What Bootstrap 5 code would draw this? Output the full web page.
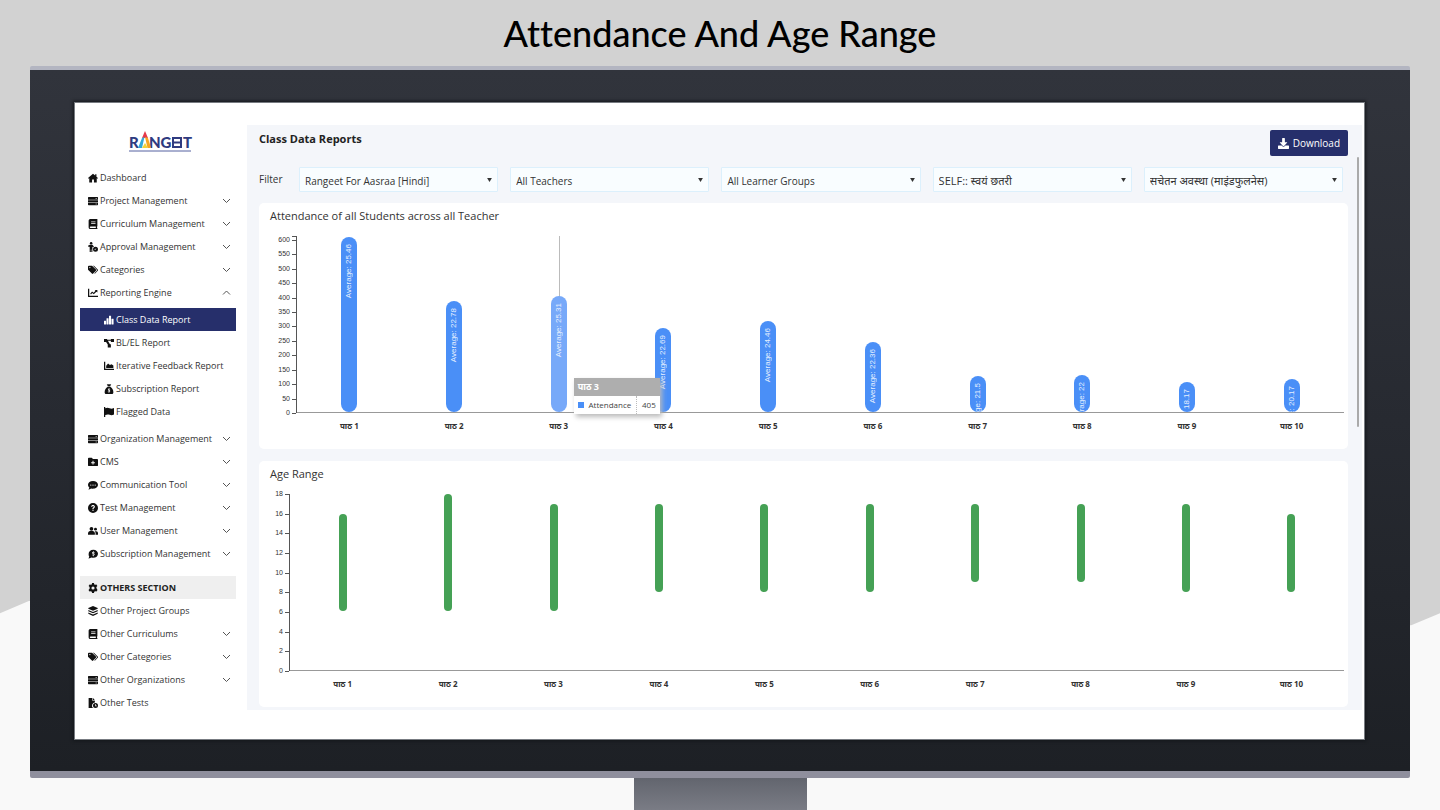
<!DOCTYPE html>
<html lang="en">
<head>
<meta charset="utf-8">
<meta name="viewport" content="width=device-width, initial-scale=1">
<title>Attendance And Age Range</title>
<link href="https://cdn.jsdelivr.net/npm/bootstrap@5.3.0/dist/css/bootstrap.min.css" rel="stylesheet">
<style>
  :root { --navy: #262f6b; --panel: #f4f6fa; --ui: "Open Sans", "Noto Sans", sans-serif; }
  body { background: #d2d2d2; font-family: var(--ui); font-size: 9px; color: #333; }
  .backdrop { inset: 0; z-index: -1; background: #f9f9f9; clip-path: polygon(0 75.7%, 2% 74.2%, 98% 77.2%, 100% 75.7%, 100% 100%, 0 100%); }
  .slide-title { font-family: "Lato", sans-serif; font-weight: 500; font-variant-ligatures: none; font-size: 36px; line-height: 66px; color: #000; }
  .monitor { margin: 0 30px; border-top: 4px solid #b3b5c1; border-bottom: 7px solid #8f8f9d; border-radius: 2px; background: linear-gradient(#31343c, #272a31 50%, #1d2025); padding: 33px 46px 32px 45px; }
  .screen { background: #fff; padding: 22px 2px 25px 0; box-shadow: 0 0 3px 2px #14171b; outline: 1px solid #777b81; }
  .stand { width: 173px; min-height: 32px; background: linear-gradient(#62656e, #7a7c85); }
  .side { width: 172px; padding: 0 11px 0 5px; }
  .logo { height: 41px; padding: 6px 0 0 6px; }
  .side a { height: 23px; padding: 0 5px 0 8px; gap: 2px; color: #333; text-decoration: none; white-space: nowrap; }
  .side a.inner { padding-left: 24px; }
  .side a.current { background: var(--navy); color: #fff; }
  .side .heading { height: 23px; padding-left: 8px; gap: 2px; background: #efefef; font-size: 9px; color: #222; margin-top: 11px; }
  .ico { width: 10px; height: 10px; fill: #111; flex: none; }
  .current .ico { fill: #fff; }
  .chev { width: 9px; height: 9px; fill: none; stroke: #555; stroke-width: 1; margin-left: auto; flex: none; }
  .panel { background: var(--panel); padding: 5px 14px 3px 12px; margin-bottom: 4px; min-width: 0; }
  .panel h2 { font-size: 11px; line-height: 18px; color: #222; }
  .btn-down { background: var(--navy); color: #fff; font-size: 10px; line-height: 16px; padding: 5px 8px; border: 0; border-radius: 2px; gap: 4px; }
  .btn-down:hover { background: #35408a; color: #fff; }
  .btn-down svg { width: 11px; height: 11px; fill: #fff; }
  .filters { margin: 11px 5px 11px 0; gap: 12px; font-size: 10px; }
  .filters > span { width: 28px; flex: none; }
  .filters .form-select { font-size: 10px; line-height: 18px; height: 25px; padding: 3px 20px 1px 5px; border: 1px solid #dcf0fc; border-radius: 1px; color: #333; background: #f9fdff url("data:image/svg+xml,%3Csvg xmlns='http://www.w3.org/2000/svg' viewBox='0 0 6 5'%3E%3Cpath d='M0 0h6L3 5z' fill='%23333'/%3E%3C/svg%3E") no-repeat right 5px center / 5px 4px; }
  .filters .form-select:lang(hi) { font-size: 11px; }
  .chart-card { background: #fff; border-radius: 5px; padding: 4px 4px 14px 11px; height: 246px; }
  .chart-card + .chart-card { margin-top: 12px; }
  .chart-card h3 { font-size: 11px; line-height: 18px; margin: 0 0 11px; font-weight: 400; color: #333; }
  .scale { height: 177px; border-right: 1px solid #555; font: 7px/8px "Liberation Sans", sans-serif; color: #333; }
  .scale-wide { width: 27px; }
  .scale-wide::before { content: ""; position: absolute; right: 0; top: 0; width: 4px; border-top: 1px solid #555; }
  .scale-slim { width: 20px; }
  .scale span { position: absolute; right: 6px; transform: translateY(50%); }
  .scale span::after { content: ""; position: absolute; right: -6px; top: 4px; width: 4px; border-top: 1px solid #555; }
  .plot { height: 177px; border-bottom: 1px solid #999; }
  .slot { flex: 1 1 0; }
  .bar { width: 16px; border-radius: 8px; background: #4a8ff7; padding-top: 7px; }
  .bar.hot { background: #77a9f9; }
  .bar span { writing-mode: vertical-rl; transform: rotate(180deg); font: 8px/10px "Liberation Sans", sans-serif; color: #e6efff; white-space: nowrap; flex: none; }
  .hairline { top: 0; bottom: 0; left: 50%; border-left: 1px solid #bbb; }
  .range { width: 8px; border-radius: 4px; background: #45a155; }
  .xlabels { font: 700 8px/12px "Noto Sans", sans-serif; color: #333; padding-top: 7px; }
  .tip { left: calc(50% + 15px); bottom: -2px; z-index: 3; width: 86px; background: #fff; box-shadow: 2px 3px 5px #bbb; font: 8px/18px var(--ui); color: #444; }
  .tip strong { background: #aeaeae; color: #fff; padding: 0 4px; font-size: 9px; line-height: 18px; }
  .tip i { width: 6px; height: 6px; background: #4a8ff7; }
  .tip b { font-weight: 400; border-left: 1px dotted #bbb; padding-left: 5px; }
  .thumb { right: 3px; top: 32px; width: 2px; height: 270px; background: #aaa; border-radius: 1px; }
</style>
</head>
<body class="d-flex flex-column min-vh-100 position-relative">
<div class="backdrop position-absolute"></div>

<svg class="d-none" xmlns="http://www.w3.org/2000/svg">
  <symbol id="home" viewBox="0 0 16 16"><path d="M8 1 0 8l1 1.200L2 8.400V15h4.500v-4.500h3V15H14V8.400l1 .8L16 8l-2.500-2.200V2h-2v2z"/></symbol>
  <symbol id="server" viewBox="0 0 16 16"><path fill-rule="evenodd" d="M1 1.500h14a1 1 0 0 1 1 1V6H0V2.500a1 1 0 0 1 1-1zm11 2v.8h2.500v-.8zM0 6.800h16v3H0zM0 10.600h16v3a1 1 0 0 1-1 1H1a1 1 0 0 1-1-1zm12 1.600v.8h2.500v-.8z"/></symbol>
  <symbol id="book" viewBox="0 0 16 16"><path fill-rule="evenodd" d="M3.500 0H15v11.500l-.5.5v2.500h.5V16H3.500A2.500 2.500 0 0 1 1 13.500v-11A2.500 2.500 0 0 1 3.500 0zM5 4v1h7V4zm0 2.500v1h7v-1zM4 12a1.200 1.200 0 0 0 0 2.400h8.500V12z"/></symbol>
  <symbol id="approve" viewBox="0 0 16 16"><circle cx="5" cy="2" r="2"/><path d="M0 6 3 4.500h4L9.500 7 8.300 8.500 7 7.500V16H5.300v-4h-.8v4H2.700V7.500L1 8z"/><path fill-rule="evenodd" d="M12 7.500a4 4 0 1 1 0 8 4 4 0 0 1 0-8zm-.6 5.300 1.900-1.900-.6-.6-1.300 1.300-.6-.6-.6.6z"/></symbol>
  <symbol id="tags" viewBox="0 0 16 16"><path fill-rule="evenodd" d="M0 2.500A1.500 1.500 0 0 1 1.500 1h5l6.200 6.200a1.500 1.500 0 0 1 0 2.100l-4.400 4.400a1.500 1.500 0 0 1-2.100 0L0 7.500zM3 3a1 1 0 1 0 0 2 1 1 0 0 0 0-2z"/><path d="M8 1h1.500l6 6.200a1.500 1.500 0 0 1 0 2.100L11 13.800l-.8-.8 3.800-3.900a1 1 0 0 0 0-1.400z"/></symbol>
  <symbol id="line" viewBox="0 0 16 16"><path d="M0 1h2v11.500h14v2H1a1 1 0 0 1-1-1z"/><path d="m3.500 9 3-3.500 2.500 2 3-3.200L10.800 3H15v4.200l-1.500-1.400L9.200 10 6.800 8l-2 2.300z"/></symbol>
  <symbol id="bars" viewBox="0 0 16 16"><rect x="0" y="9" width="3.300" height="6" rx=".5"/><rect x="4" y="5" width="3.300" height="10" rx=".5"/><rect x="8" y="1" width="3.300" height="14" rx=".5"/><rect x="12" y="6" width="3.300" height="9" rx=".5"/></symbol>
  <symbol id="nodes" viewBox="0 0 16 16"><path d="M0 1.500h5v1.300h6V1.500h5v5h-5V4.500H6.200L9.500 10H11v5H6v-4.500L3.300 6.500H0z"/></symbol>
  <symbol id="area" viewBox="0 0 16 16"><path d="M0 1h2v11.500h14v2H1a1 1 0 0 1-1-1zM3.500 11V7.500L6.500 4l3 2.500L12 5l3 2v4z"/></symbol>
  <symbol id="bag" viewBox="0 0 16 16"><path fill-rule="evenodd" d="m4.500 0 2 .8L8 0l1.500.8 2-.8L10 3.500H6zM6 4.500h4c3 2 5 5 5 8.500 0 2-1 3-3 3H4c-2 0-3-1-3-3 0-3.500 2-6.500 5-8.500zm1.500 2V7.600C5.800 8 5.800 10.400 7.500 10.800c1.700.4 1.500 1.200.4 1.200-.8 0-1.200-.3-1.700-.6v1.200l1.300.5V14h1v-.9c2-.4 2-2.900.2-3.400-1.500-.4-1.400-1.100-.4-1.100.6 0 1 .2 1.500.4V7.900l-1.300-.4v-1z"/></symbol>
  <symbol id="flag" viewBox="0 0 16 16"><path d="M0 0h2v2c3-1.300 4.500-1 7 0 2.500 1 4 .8 7-.5V12c-3 1.300-4.500 1.300-7 .5-2.500-.9-4-.8-7 .2V16H0z"/></symbol>
  <symbol id="folder" viewBox="0 0 16 16"><path fill-rule="evenodd" d="M1.500 1H6L8 3h6.500A1.500 1.500 0 0 1 16 4.500V13a1.500 1.500 0 0 1-1.500 1.500h-13A1.500 1.500 0 0 1 0 13V2.500A1.500 1.500 0 0 1 1.500 1zM7.200 6v2.200H5v1.600h2.200V12h1.600V9.800H11V8.200H8.800V6z"/></symbol>
  <symbol id="chat" viewBox="0 0 16 16"><path fill-rule="evenodd" d="M8 1.500c4.500 0 8 2.700 8 6.200S12.500 14 8 14c-1 0-2-.2-3-.4C3.700 14.500 2 15 .5 15c1-1 1.500-2 1.600-3C.8 10.900 0 9.400 0 7.700 0 4.200 3.500 1.500 8 1.500zM4.500 7a1 1 0 1 0 0 2 1 1 0 0 0 0-2zM8 7a1 1 0 1 0 0 2 1 1 0 0 0 0-2zm3.500 0a1 1 0 1 0 0 2 1 1 0 0 0 0-2z"/></symbol>
  <symbol id="help" viewBox="0 0 16 16"><path fill-rule="evenodd" d="M8 0a8 8 0 1 1 0 16A8 8 0 0 1 8 0zM5 6h1.800c.1-1.500 2.500-1.400 2.400.1C9.100 7.300 7 7.300 7.100 9.500h1.700C8.800 8.200 11 8 11 6 10.900 2.400 5 2.400 5 6zm3 4.500a1 1 0 1 0 0 2.100 1 1 0 0 0 0-2.100z"/></symbol>
  <symbol id="users" viewBox="0 0 16 16"><circle cx="5.500" cy="4.500" r="3"/><path d="M0 14v-2c0-2.500 1.500-4 3.500-4h4c2 0 3.500 1.500 3.500 4v2z"/><circle cx="12" cy="5" r="2.300"/><path d="M12 14h4v-2.500c0-2-1-3.300-3-3.300h-2.200c1 .9 1.400 2.100 1.400 3.800z"/></symbol>
  <symbol id="coin" viewBox="0 0 16 16"><path fill-rule="evenodd" d="M8.500 1C12.800 1 16 3.800 16 7.500S12.800 14 8.500 14c-1 0-2-.2-3-.4C4.200 14.500 2 15 .5 15c1-1 1.300-2 1.400-3.200A6 6 0 0 1 1 7.500C1 3.800 4.200 1 8.500 1zM8 3.500v1C6 5 6 7.500 8 8c1.500.4 1.400 1.200.5 1.200-.8 0-1.200-.3-1.800-.6v1.400l1.300.4v1.100h1v-1c2.200-.5 2.100-3.100.2-3.600-1.500-.4-1.300-1.100-.5-1.100.6 0 1 .1 1.600.4V4.900L9 4.500v-1z"/></symbol>
  <symbol id="gear" viewBox="0 0 16 16"><path fill-rule="evenodd" d="M6.500 0h3l.5 2.200 1.300.7 2.200-.7L15 4.800l-1.600 1.600v1.500L15.200 11l-1.600 2.700-2.300-.7-1.300.8-.5 2.200h-3L6 13.800 4.700 13l-2.300.7L.8 11l1.800-1.700V6.400L1 4.800l1.500-2.600 2.200.7L6 2.200zM8 5.500a2.500 2.500 0 1 0 0 5 2.500 2.500 0 0 0 0-5z"/></symbol>
  <symbol id="layers" viewBox="0 0 16 16"><path d="M8 0l7.500 3.300v1L8 7.500.5 4.300v-1zM.5 6.300 8 9.500l7.500-3.200v2L8 11.500.5 8.300zM.5 10.500 8 13.500l7.500-3v2L8 16 .5 12.500z"/></symbol>
  <symbol id="filedoc" viewBox="0 0 16 16"><path d="M1 0h6v4.500h4v2.800A5 5 0 0 0 8 16H1z"/><path d="M8 0l3 3.500H8z"/><path fill-rule="evenodd" d="M12 8a4 4 0 1 1 0 8 4 4 0 0 1 0-8zm-.5 1.500V13H14v-1h-1.500V9.500z"/></symbol>
  <symbol id="down" viewBox="0 0 9 9"><path d="m1 3 3.500 3.500L8 3"/></symbol>
  <symbol id="up" viewBox="0 0 9 9"><path d="m1 6.500 3.500-3.500L8 6.500"/></symbol>
</svg>

<h1 class="slide-title text-center m-0">Attendance And Age Range</h1>

<div class="monitor">
  <div class="screen d-flex align-items-start">
    <nav class="side flex-shrink-0">
      <div class="logo text-center">
        <svg width="64" height="22" viewBox="0 0 64 22" role="img" aria-label="Rangeet">
          <g font-family="Lato, sans-serif" font-weight="900" font-size="15" fill="#2f3b80">
            <text x="0" y="17">R</text><text x="20" y="17">NG</text><text x="54" y="17">T</text>
          </g>
          <path d="M44 7h8M44 11.500h8M44 16h8M44 6v11M52 6v11" stroke="#2f3b80" stroke-width="2" fill="none"/>
          <path d="m16 0 3 7h-6z" fill="#e5394a"/><path d="m13 7 2.500-1-2.500 11h-4z" fill="#35a9d8"/><path d="m16 6 3 1 3 10h-3.500z" fill="#f6a623"/><path d="m13 17 3-5 3 5z" fill="#f3d33b"/>
          <path d="M0 20h62" stroke="#5560a0" stroke-width="1"/>
        </svg>
      </div>
      <div id="menu"></div>
    </nav>

    <main class="panel flex-grow-1 position-relative">
      <div class="d-flex justify-content-between align-items-start">
        <h2 class="fw-bold m-0">Class Data Reports</h2>
        <button type="button" class="btn btn-down d-flex align-items-center">
          <svg viewBox="0 0 512 512" aria-hidden="true"><path d="M216 0h80c13.300 0 24 10.700 24 24v168h87.700c17.800 0 26.700 21.500 14.100 34.100L269.700 378.300c-7.500 7.500-19.800 7.500-27.300 0L90.100 226.100c-12.600-12.600-3.700-34.100 14.100-34.100H192V24c0-13.300 10.700-24 24-24zm296 376v112c0 13.300-10.700 24-24 24H24c-13.300 0-24-10.700-24-24V376c0-13.300 10.700-24 24-24h146.700l49 49c20.100 20.100 52.500 20.100 72.600 0l49-49H488c13.300 0 24 10.700 24 24z"/></svg>Download
        </button>
      </div>

      <form class="filters d-flex align-items-center">
        <span>Filter</span>
        <select class="form-select" aria-label="Project"><option>Rangeet For Aasraa [Hindi]</option></select>
        <select class="form-select" aria-label="Teacher"><option>All Teachers</option></select>
        <select class="form-select" aria-label="Learner group"><option>All Learner Groups</option></select>
        <select class="form-select" lang="hi" aria-label="Module"><option>SELF:: स्वयं छतरी</option></select>
        <select class="form-select" lang="hi" aria-label="Lesson"><option>सचेतन अवस्था (माइंडफुलनेस)</option></select>
      </form>

      <section class="chart-card">
        <h3>Attendance of all Students across all Teacher</h3>
        <div class="d-flex">
          <div class="scale scale-wide position-relative" id="attScale"></div>
          <div class="flex-grow-1">
            <div class="plot d-flex" id="attPlot"></div>
            <div class="xlabels d-flex text-center" id="attLabels"></div>
          </div>
        </div>
      </section>

      <section class="chart-card">
        <h3>Age Range</h3>
        <div class="d-flex">
          <div class="scale scale-slim position-relative" id="ageScale"></div>
          <div class="flex-grow-1">
            <div class="plot d-flex" id="agePlot"></div>
            <div class="xlabels d-flex text-center" id="ageLabels"></div>
          </div>
        </div>
      </section>
      <div class="thumb position-absolute"></div>
    </main>
  </div>
</div>
<div class="stand mx-auto flex-grow-1"></div>

<script src="https://cdn.jsdelivr.net/npm/bootstrap@5.3.0/dist/js/bootstrap.bundle.min.js"></script>
<script>
  const put = (id, html) => { document.getElementById(id).innerHTML = html; };
  const icon = (name, cls) => `<svg class="${cls}" aria-hidden="true"><use href="#${name}"/></svg>`;
  const link = ([ico, text, chev, cls]) =>
    `<a href="#" class="d-flex align-items-center ${cls || ''}">${icon(ico, 'ico')}<span>${text}</span>${chev ? icon(chev, 'chev') : ''}</a>`;

  const top1 = [['home', 'Dashboard'], ['server', 'Project Management', 'down'], ['book', 'Curriculum Management', 'down'],
    ['approve', 'Approval Management', 'down'], ['tags', 'Categories', 'down'], ['line', 'Reporting Engine', 'up']];
  const reports = [['bars', 'Class Data Report', '', 'inner current'], ['nodes', 'BL/EL Report', '', 'inner'],
    ['area', 'Iterative Feedback Report', '', 'inner'], ['bag', 'Subscription Report', '', 'inner'], ['flag', 'Flagged Data', '', 'inner']];
  const top2 = [['server', 'Organization Management', 'down'], ['folder', 'CMS', 'down'], ['chat', 'Communication Tool', 'down'],
    ['help', 'Test Management', 'down'], ['users', 'User Management', 'down'], ['coin', 'Subscription Management', 'down']];
  const others = [['layers', 'Other Project Groups'], ['book', 'Other Curriculums', 'down'], ['tags', 'Other Categories', 'down'],
    ['server', 'Other Organizations', 'down'], ['filedoc', 'Other Tests']];
  const all = list => list.map(link).join('');
  put('menu', all(top1) + `<div class="py-1">${all(reports)}</div>` + all(top2) +
    `<div class="heading d-flex align-items-center fw-bold">${icon('gear', 'ico')}<span>OTHERS SECTION</span></div>` + all(others));

  const scale = (id, max, step, limit) => {
    let html = '';
    for (let v = 0; v <= max; v += step) html += `<span style="bottom:${v / limit * 100}%">${v}</span>`;
    put(id, html);
  };
  const labels = Array.from({ length: 10 }, (_, i) => `<div class="slot">पाठ ${i + 1}</div>`).join('');
  put('attLabels', labels);
  put('ageLabels', labels);

  const attMax = 613;
  scale('attScale', 600, 50, attMax);
  const tip = '<div class="tip position-absolute"><strong class="d-block">पाठ 3</strong>' +
    '<div class="d-flex align-items-center justify-content-between px-1"><i></i><span>Attendance</span><b>405</b></div></div>';
  const att = [[610, 25.46], [385, 22.78], [405, 25.31], [293, 22.69], [317, 24.46], [245, 22.36], [126, 21.5], [128, 22], [106, 18.17], [116, 20.17]];
  put('attPlot', att.map(([n, avg], i) =>
    `<div class="slot d-flex justify-content-center align-items-end position-relative">${i === 2 ? '<div class="hairline position-absolute"></div>' : ''}` +
    `<div class="bar position-relative d-flex flex-column align-items-center overflow-hidden ${i === 2 ? 'hot' : ''}" style="height:${n / attMax * 100}%"><span>Average: ${avg}</span></div>${i === 2 ? tip : ''}</div>`).join(''));

  const ageMax = 18;
  scale('ageScale', 18, 2, ageMax);
  const age = [[6, 16], [6, 18], [6, 17], [8, 17], [8, 17], [8, 17], [9, 17], [9, 17], [8, 17], [8, 16]];
  put('agePlot', age.map(([lo, hi]) =>
    `<div class="slot d-flex flex-column justify-content-end align-items-center"><div class="range" style="height:${(hi - lo) / ageMax * 100}%"></div><div style="height:${lo / ageMax * 100}%"></div></div>`).join(''));
</script>
</body>
</html>
